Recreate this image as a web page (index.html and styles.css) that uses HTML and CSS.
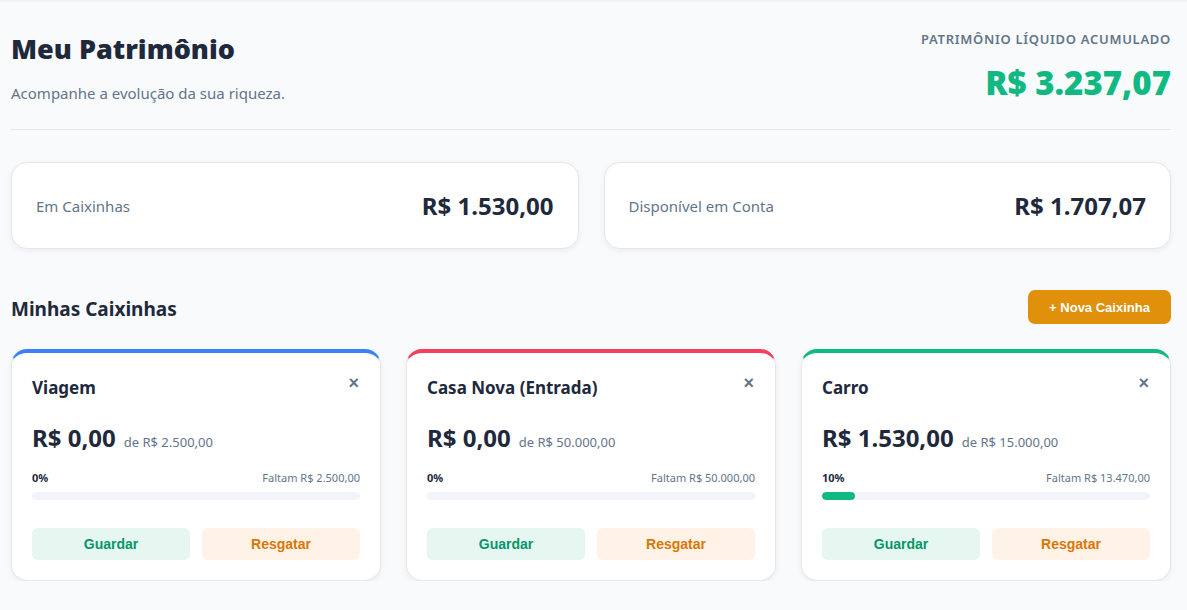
FILE: index.html
```html
<!DOCTYPE html>
<html lang="pt-BR">
<head>
<meta charset="utf-8">
<link rel="stylesheet" href="styles.css">
</head>
<body>
<div class="topshade"></div>
<main class="page">
  <header class="header">
    <div class="header-left">
      <h1 class="title">Meu Patrimônio</h1>
      <p class="subtitle">Acompanhe a evolução da sua riqueza.</p>
    </div>
    <div class="header-right">
      <div class="net-label">PATRIMÔNIO LÍQUIDO ACUMULADO</div>
      <div class="net-value">R$ 3.237,07</div>
    </div>
  </header>

  <section class="summary">
    <div class="summary-card">
      <span class="summary-label">Em Caixinhas</span>
      <span class="summary-value">R$ 1.530,00</span>
    </div>
    <div class="summary-card">
      <span class="summary-label">Disponível em Conta</span>
      <span class="summary-value">R$ 1.707,07</span>
    </div>
  </section>

  <div class="section-head">
    <h2 class="section-title">Minhas Caixinhas</h2>
    <button class="btn-new">+ Nova Caixinha</button>
  </div>

  <section class="boxes">
    <article class="box box-blue">
      <div class="box-head">
        <h3 class="box-name">Viagem</h3>
        <span class="box-close">×</span>
      </div>
      <div class="box-amount"><span class="box-value">R$ 0,00</span><span class="box-goal">de R$ 2.500,00</span></div>
      <div class="box-progress-info"><span class="box-pct">0%</span><span class="box-left">Faltam R$ 2.500,00</span></div>
      <div class="bar"><div class="bar-fill" style="width:0%"></div></div>
      <div class="box-actions">
        <button class="btn-save">Guardar</button>
        <button class="btn-withdraw">Resgatar</button>
      </div>
    </article>

    <article class="box box-red">
      <div class="box-head">
        <h3 class="box-name">Casa Nova (Entrada)</h3>
        <span class="box-close">×</span>
      </div>
      <div class="box-amount"><span class="box-value">R$ 0,00</span><span class="box-goal">de R$ 50.000,00</span></div>
      <div class="box-progress-info"><span class="box-pct">0%</span><span class="box-left">Faltam R$ 50.000,00</span></div>
      <div class="bar"><div class="bar-fill" style="width:0%"></div></div>
      <div class="box-actions">
        <button class="btn-save">Guardar</button>
        <button class="btn-withdraw">Resgatar</button>
      </div>
    </article>

    <article class="box box-green">
      <div class="box-head">
        <h3 class="box-name">Carro</h3>
        <span class="box-close">×</span>
      </div>
      <div class="box-amount"><span class="box-value">R$ 1.530,00</span><span class="box-goal">de R$ 15.000,00</span></div>
      <div class="box-progress-info"><span class="box-pct">10%</span><span class="box-left">Faltam R$ 13.470,00</span></div>
      <div class="bar"><div class="bar-fill" style="width:10.2%"></div></div>
      <div class="box-actions">
        <button class="btn-save">Guardar</button>
        <button class="btn-withdraw">Resgatar</button>
      </div>
    </article>
  </section>
</main>
</body>
</html>
```

FILE: styles.css
```css
* { box-sizing: border-box; }
html, body { margin: 0; padding: 0; }
body {
  background: #f8fafc;
  font-family: "Noto Sans", "Open Sans", sans-serif;
  color: #1e293b;
}
.topshade {
  height: 3px;
  background: linear-gradient(#eceef1, #f8fafc);
}
.page {
  padding: 0 16px 0 11px;
}
.header {
  display: flex;
  justify-content: space-between;
  align-items: flex-start;
  padding-top: 26px;
  padding-bottom: 26px;
  border-bottom: 1px solid #e2e8f0;
}
.title {
  margin: 0;
  font-size: 27px;
  font-weight: 900;
  line-height: 40px;
  color: #1e293b;
}
.subtitle {
  margin: 14px 0 0;
  font-size: 15px;
  color: #64748b;
  line-height: 20px;
}
.header-right { text-align: right; }
.net-label {
  font-size: 13px;
  font-weight: 600;
  color: #64748b;
  letter-spacing: 0.7px;
  line-height: 20px;
  margin-top: 0;
}
.net-value {
  font-size: 33px;
  font-weight: 900;
  color: #10b981;
  line-height: 40px;
  margin-top: 14px;
}
.summary {
  display: grid;
  grid-template-columns: 1fr 1fr;
  gap: 25px;
  margin-top: 32px;
}
.summary-card {
  background: #fff;
  border: 1px solid #e5e7eb;
  border-radius: 16px;
  height: 87px;
  padding: 0 24px;
  display: flex;
  align-items: center;
  justify-content: space-between;
  box-shadow: 0 2px 6px rgba(15, 23, 42, 0.06);
}
.summary-label {
  font-size: 15px;
  color: #64748b;
}
.summary-value {
  font-size: 24px;
  font-weight: 700;
  color: #1e293b;
}
.section-head {
  display: flex;
  justify-content: space-between;
  align-items: center;
  margin-top: 41px;
}
.section-title {
  margin: 4px 0 0;
  font-size: 19px;
  font-weight: 700;
  color: #1e293b;
}
.btn-new {
  background: #e0900a;
  color: #fff;
  border: none;
  border-radius: 7px;
  height: 34px;
  width: 143px;
  font-family: "Liberation Sans", Arial, sans-serif;
  font-weight: 700;
  font-size: 13px;
}
.boxes {
  display: grid;
  grid-template-columns: 1fr 1fr 1fr;
  gap: 25px;
  margin-top: 25px;
}
.box {
  background: #fff;
  border: 1px solid #e5e7eb;
  border-top: 4px solid #3b82f6;
  border-radius: 16px;
  padding: 22px 20px 20px;
  box-shadow: 0 2px 6px rgba(15, 23, 42, 0.06);
  height: 232px;
}
.box-blue { border-top-color: #3b82f6; }
.box-red { border-top-color: #f43f5e; }
.box-green { border-top-color: #10b981; }
.box-head {
  display: flex;
  justify-content: space-between;
  align-items: center;
  height: 24px;
}
.box-name {
  margin: 0;
  font-size: 17px;
  font-weight: 700;
  color: #1e293b;
}
.box-close {
  font-family: "Liberation Sans", Arial, sans-serif;
  font-size: 18px;
  font-weight: 700;
  color: #64748b;
  line-height: 18px;
  margin-top: -8px;
  margin-right: 1px;
}
.box-amount {
  display: flex;
  align-items: baseline;
  gap: 8px;
  margin-top: 22px;
  height: 32px;
}
.box-value {
  font-size: 24px;
  font-weight: 700;
  color: #1e293b;
}
.box-goal {
  font-size: 13px;
  color: #64748b;
}
.box-progress-info {
  display: flex;
  justify-content: space-between;
  margin-top: 17px;
  font-size: 11px;
  line-height: 16px;
}
.box-pct { font-weight: 700; color: #1e293b; }
.box-left { color: #64748b; }
.bar {
  height: 8px;
  background: #f1f5f9;
  border-radius: 4px;
  margin-top: 6px;
  overflow: hidden;
}
.bar-fill {
  height: 100%;
  background: #10b981;
  border-radius: 4px;
}
.box-actions {
  display: grid;
  grid-template-columns: 1fr 1fr;
  gap: 12px;
  margin-top: 28px;
}
.box-actions button {
  height: 32px;
  border: none;
  border-radius: 6px;
  font-family: "Liberation Sans", Arial, sans-serif;
  font-weight: 700;
  font-size: 14px;
}
.btn-save { background: #e6f6f0; color: #059669; }
.btn-withdraw { background: #fef3e6; color: #d97706; }
```
